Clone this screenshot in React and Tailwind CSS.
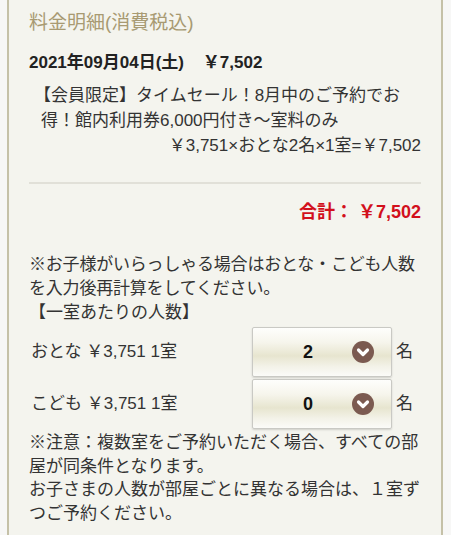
import React from 'react';

const font = { fontFamily: '"Liberation Sans", "Noto Sans CJK JP", sans-serif' };

function Chevron() {
  return (
    <svg width="22" height="22" viewBox="0 0 22 22" className="shrink-0">
      <circle cx="11" cy="11" r="11" fill="#7b5a50" />
      <path d="M6.5 9 L11 13.5 L15.5 9" fill="none" stroke="#fff" strokeWidth="3.2" strokeLinecap="round" strokeLinejoin="round" />
    </svg>
  );
}

function CountRow({ label, value }) {
  return (
    <div className="flex items-center h-[50px]">
      <div className="w-[223px] pl-[2px] text-[17px] text-[#333]">{label}</div>
      <div className="w-[140px] h-[50px] flex items-center pl-[44px] rounded-[2px] border border-[#c9c9c4] shadow-[0_1px_2px_rgba(0,0,0,0.15)] bg-[linear-gradient(to_bottom,#fefefc_0%,#f6f5ec_30%,#e7e5cf_58%,#f3f2e8_80%,#fbfbf8_100%)]">
        <span className="w-[22px] text-center text-[18px] font-bold text-[#111]">{value}</span>
        <span className="ml-[33px]"><Chevron /></span>
      </div>
      <span className="ml-[4px] text-[17px] text-[#333]">名</span>
    </div>
  );
}

export default function App() {
  return (
    <div className="min-h-screen bg-[#f7f7f6] pl-[7px] pr-[8px]" style={font}>
      <div className="min-h-[535px] border-x-2 border-[#c5c1a8] bg-[#f4f4ee] px-5 pt-[10px] text-[#333]">
        <h2 className="text-[19px] leading-[26px] text-[#a89a72]">料金明細(消費税込)</h2>

        <p className="mt-[14px] text-[17px] leading-[25px] font-bold text-[#222]">2021年09月04日(土)&nbsp;&nbsp;&nbsp;&nbsp;￥7,502</p>

        <div className="mt-[8px] pl-[12px] text-[17px] leading-[25px]">
          <p className="indent-[-7px]">【会員限定】タイムセール！8月中のご予約でお得！館内利用券6,000円付き～室料のみ</p>
          <p className="text-right">￥3,751×おとな2名×1室=￥7,502</p>
        </div>

        <div className="mt-[24px] h-[2px] bg-[#e1e0d8]" />

        <p className="mt-[15px] text-right text-[18px] leading-[26px] font-bold text-[#d2101c]">合計：&nbsp;￥7,502</p>

        <div className="mt-[28px] text-[17px] leading-[24px]">
          <p className="tracking-[-0.2px]">※お子様がいらっしゃる場合はおとな・こども人数を入力後再計算をしてください。</p>
          <p>【一室あたりの人数】</p>
        </div>

        <div className="mt-[2px] flex flex-col gap-[2px]">
          <CountRow label="おとな ￥3,751 1室" value="2" />
          <CountRow label="こども ￥3,751 1室" value="0" />
        </div>

        <div className="mt-[2px] text-[17px] leading-[23.5px]">
          <p>※注意：複数室をご予約いただく場合、すべての部屋が同条件となります。</p>
          <p>お子さまの人数が部屋ごとに異なる場合は、１室ずつご予約ください。</p>
        </div>
      </div>
    </div>
  );
}
